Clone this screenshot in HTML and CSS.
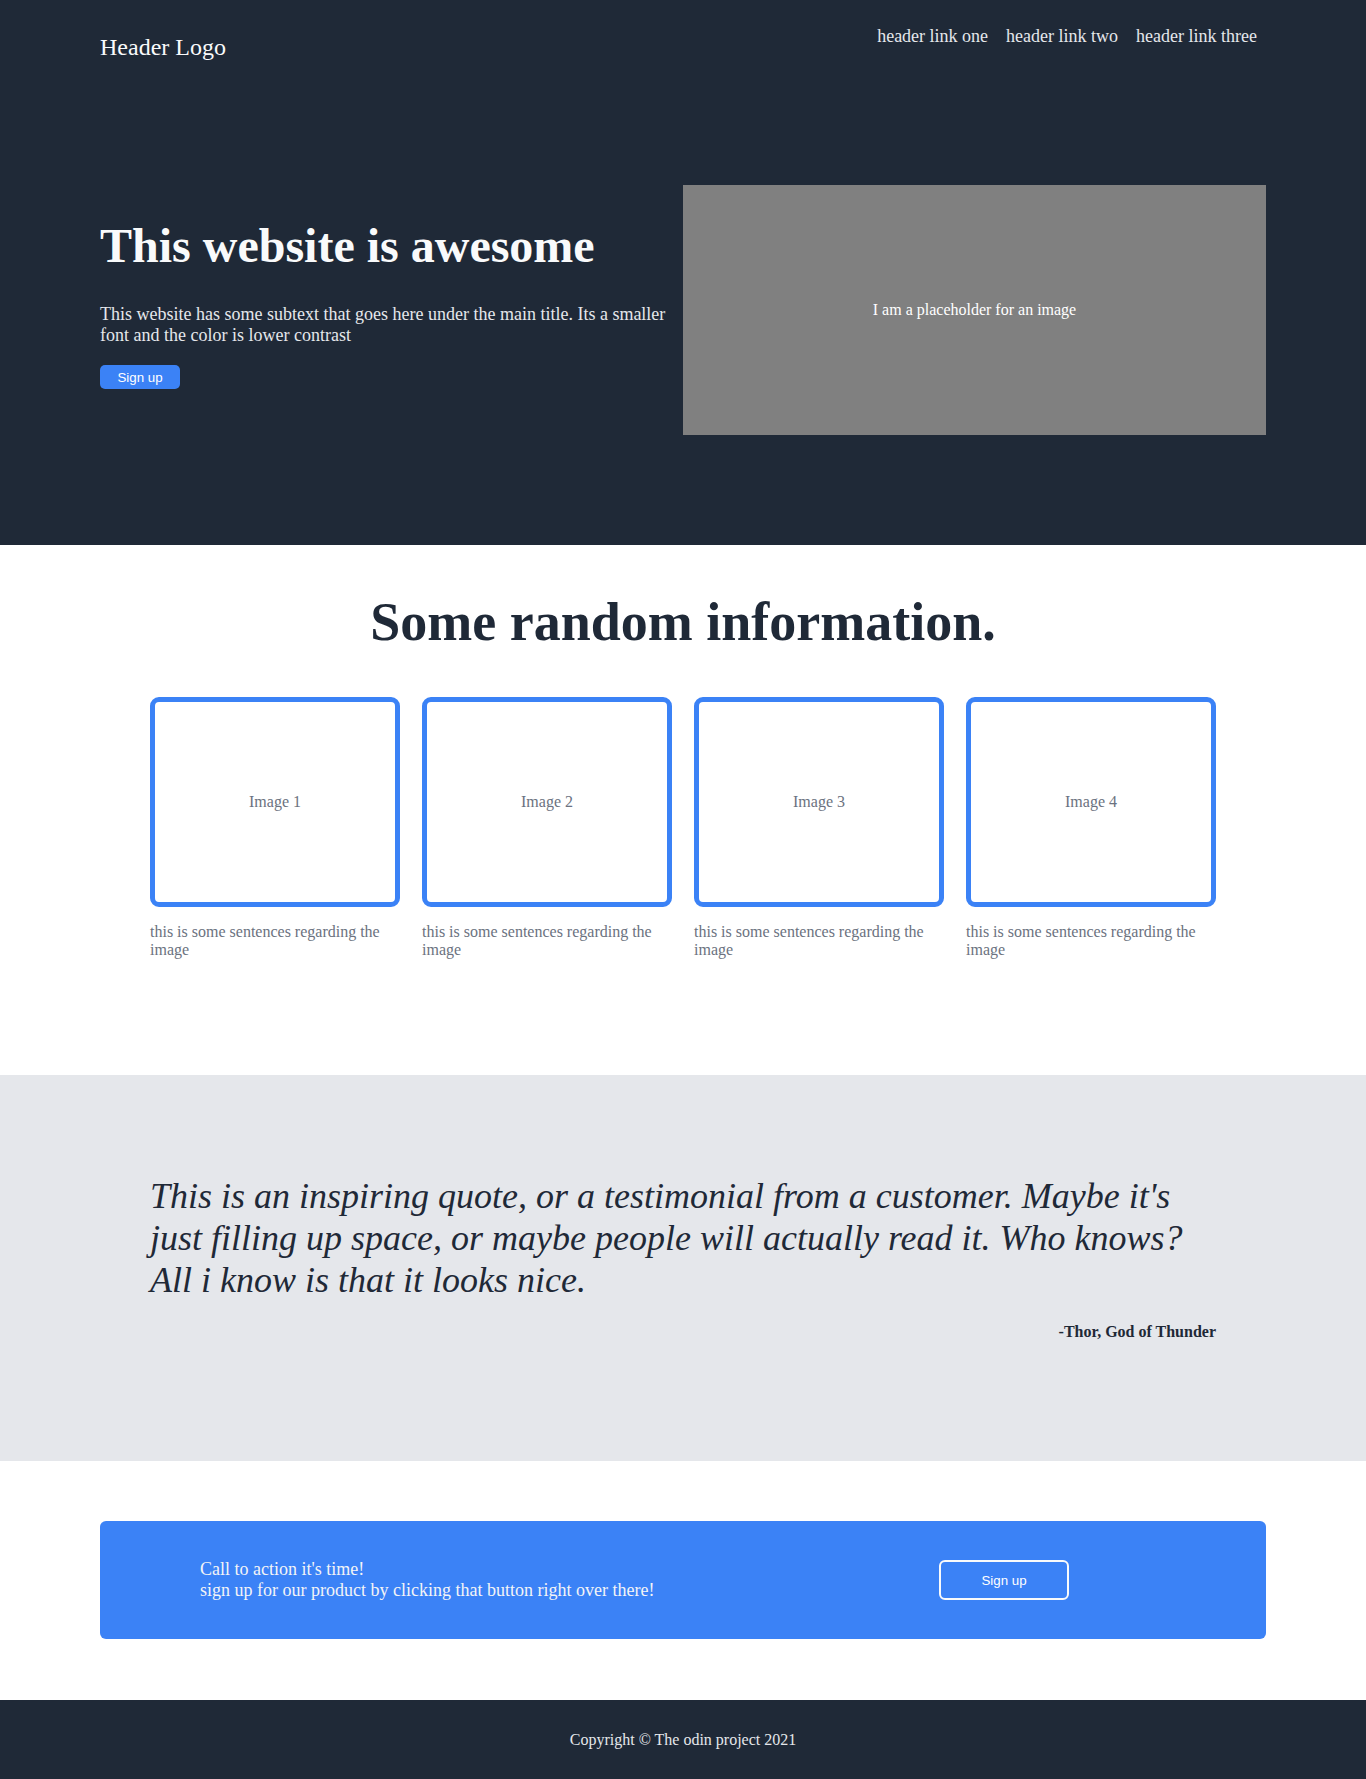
FILE: index.html
```html
<!DOCTYPE html>
<html lang="en">
<head>
<meta charset="UTF-8">
<title>Landing Page</title>
<link rel="stylesheet" href="styles.css">
</head>
<body>
<div class="top">
  <header class="header">
    <div class="logo">Header Logo</div>
    <nav class="nav">
      <a href="#">header link one</a>
      <a href="#">header link two</a>
      <a href="#">header link three</a>
    </nav>
  </header>
  <section class="hero">
    <div class="hero-text">
      <h1 class="hero-title">This website is awesome</h1>
      <p class="hero-sub">This website has some subtext that goes here under the main title. Its a smaller font and the color is lower contrast</p>
      <button class="btn-primary">Sign up</button>
    </div>
    <div class="hero-image">I am a placeholder for an image</div>
  </section>
</div>

<section class="info">
  <h2 class="info-title">Some random information.</h2>
  <div class="cards">
    <div class="card">
      <div class="card-box">Image 1</div>
      <p class="card-text">this is some sentences regarding the image</p>
    </div>
    <div class="card">
      <div class="card-box">Image 2</div>
      <p class="card-text">this is some sentences regarding the image</p>
    </div>
    <div class="card">
      <div class="card-box">Image 3</div>
      <p class="card-text">this is some sentences regarding the image</p>
    </div>
    <div class="card">
      <div class="card-box">Image 4</div>
      <p class="card-text">this is some sentences regarding the image</p>
    </div>
  </div>
</section>

<section class="quote">
  <p class="quote-text">This is an inspiring quote, or a testimonial from a customer. Maybe it's just filling up space, or maybe people will actually read it. Who knows? All i know is that it looks nice.</p>
  <p class="quote-author">-Thor, God of Thunder</p>
</section>

<section class="cta-wrap">
  <div class="cta">
    <div class="cta-text">
      <div>Call to action it's time!</div>
      <div>sign up for our product by clicking that button right over there!</div>
    </div>
    <button class="btn-outline">Sign up</button>
  </div>
</section>

<footer class="footer">Copyright © The odin project 2021</footer>
</body>
</html>
```

FILE: styles.css
```css
* {
  box-sizing: border-box;
}

body {
  margin: 0;
  font-family: "Liberation Serif", "Times New Roman", serif;
  background: #ffffff;
}

.top {
  background: #1f2937;
  color: #f9fafb;
}

.header {
  height: 70px;
  padding: 26px 100px 0;
  display: flex;
  justify-content: space-between;
  align-items: flex-start;
}

.logo {
  font-size: 24px;
  margin-top: 8px;
  color: #f9fafb;
}

.nav {
  display: flex;
}

.nav a {
  font-size: 18px;
  color: #e5e7eb;
  text-decoration: none;
  padding: 0 9px;
}

.hero {
  display: flex;
  align-items: flex-start;
  padding: 115px 100px 110px;
}

.hero-text {
  flex: 1 1 0;
  padding-top: 37px;
}

.hero-title {
  margin: 0;
  font-size: 48px;
  line-height: 48px;
  font-weight: bold;
  color: #f9fafb;
}

.hero-sub {
  margin: 34px 0 0;
  font-size: 18px;
  color: #e5e7eb;
}

.btn-primary {
  margin-top: 19px;
  width: 80px;
  height: 24px;
  padding: 0;
  border: none;
  border-radius: 5px;
  background: #3b82f6;
  color: #ffffff;
  font-family: "Liberation Sans", Arial, sans-serif;
  font-size: 13.333px;
}

.hero-image {
  flex: 1 1 0;
  height: 250px;
  background: #808080;
  color: #ffffff;
  font-size: 16px;
  display: flex;
  align-items: center;
  justify-content: center;
}

.info {
  padding: 46px 150px 116px;
}

.info-title {
  margin: 0;
  text-align: center;
  font-size: 54px;
  font-weight: bold;
  color: #1f2937;
}

.cards {
  margin-top: 44px;
  display: flex;
  justify-content: space-between;
}

.card {
  width: 250px;
}

.card-box {
  height: 210px;
  border: 5px solid #3b82f6;
  border-radius: 9px;
  display: flex;
  align-items: center;
  justify-content: center;
  color: #6b7280;
  font-size: 16px;
}

.card-text {
  margin: 16px 0 0;
  font-size: 16px;
  color: #6b7280;
}

.quote {
  background: #e5e7eb;
  padding: 100px 150px 120px;
  color: #1f2937;
}

.quote-text {
  margin: 0;
  font-size: 36px;
  font-style: italic;
}

.quote-author {
  margin: 22px 0 0;
  text-align: right;
  font-size: 16px;
  font-weight: bold;
}

.cta-wrap {
  padding: 60px 100px 61px;
}

.cta {
  height: 118px;
  background: #3b82f6;
  border-radius: 6px;
  display: flex;
  align-items: center;
  justify-content: space-between;
  padding: 0 197px 0 100px;
  color: #f3f4f6;
  font-size: 18px;
}

.btn-outline {
  width: 130px;
  height: 40px;
  padding: 0;
  background: transparent;
  border: 2px solid #f9fafb;
  border-radius: 6px;
  color: #ffffff;
  font-family: "Liberation Sans", Arial, sans-serif;
  font-size: 13.333px;
}

.footer {
  height: 80px;
  background: #1f2937;
  color: #e5e7eb;
  font-size: 16px;
  display: flex;
  align-items: center;
  justify-content: center;
}
```
